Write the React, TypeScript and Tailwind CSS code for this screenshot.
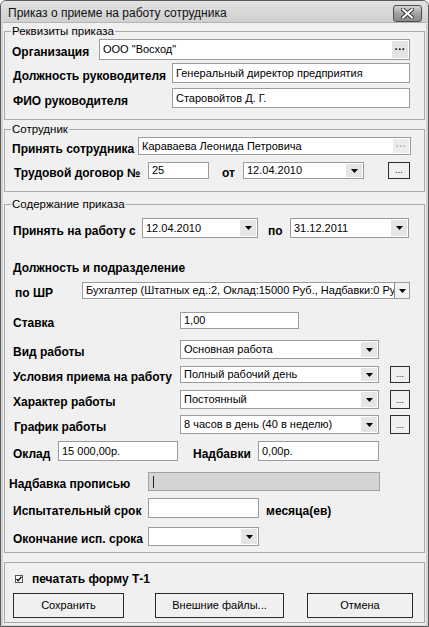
import type { ReactNode } from 'react'

const FONT = "font-['Liberation_Sans',Arial,sans-serif]"

function Label({ className = '', children }: { className?: string; children: ReactNode }) {
  return (
    <span className={`shrink-0 overflow-hidden whitespace-nowrap pt-[5px] text-[12px] leading-[14px] font-bold text-black ${className}`}>
      {children}
    </span>
  )
}

function Arrow() {
  return (
    <svg width="7" height="4" viewBox="0 0 7 4">
      <path d="M0 0h7L3.5 4z" fill="#000" />
    </svg>
  )
}

function TextBox({ className = '', value = '', disabled = false }: { className?: string; value?: string; disabled?: boolean }) {
  return (
    <div
      className={`flex h-full shrink-0 items-center overflow-hidden whitespace-nowrap border px-[3px] text-[11px] leading-[13px] ${
        disabled ? 'border-[#a3a3a3] bg-[#d4d4d4]' : 'border-[#9c9c9c] bg-white'
      } ${className}`}
    >
      {value}
      {disabled && <span className="ml-[1px] h-[12px] w-[1px] bg-[#222]" />}
    </div>
  )
}

function Combo({ className = '', value = '' }: { className?: string; value?: string }) {
  return (
    <div className={`flex h-full shrink-0 border border-[#9c9c9c] bg-white ${className}`}>
      <div className="flex min-w-0 flex-1 items-center overflow-hidden whitespace-nowrap px-[3px] text-[11px] leading-[13px]">{value}</div>
      <div className="my-[1px] mr-[1px] flex w-[16px] items-center justify-center bg-[#e6e6e6]">
        <Arrow />
      </div>
    </div>
  )
}

function DotsButton({ className = '' }: { className?: string }) {
  return (
    <div className={`flex h-full shrink-0 items-end justify-center border border-[#2e2e2e] bg-[#f0f0f0] pb-[3px] text-[9px] leading-[9px] ${className}`}>
      ...
    </div>
  )
}

function GroupBox({ legend, className = '', children }: { legend: string; className?: string; children: ReactNode }) {
  return (
    <fieldset className={`border border-[#a9a9a9] ${className}`}>
      <legend className="ml-[6px] px-[1px] text-[11.5px] leading-[14px]">{legend}</legend>
      {children}
    </fieldset>
  )
}

function CloseIcon() {
  return (
    <svg width="13" height="11" viewBox="0 0 13 11">
      <path d="M2 1.5l9 8M11 1.5l-9 8" stroke="#3a3a3a" strokeWidth="4" strokeLinecap="square" />
      <path d="M2 1.5l9 8M11 1.5l-9 8" stroke="#fff" strokeWidth="2" strokeLinecap="square" />
    </svg>
  )
}

export default function App() {
  return (
    <div className={`${FONT} flex h-[627px] w-[429px] flex-col rounded-t-[6px] border border-[#5a5a5a] bg-[#d2d2d2] text-black`}>
      {/* Title bar */}
      <div className="flex h-[21px] shrink-0 items-start rounded-t-[5px] bg-gradient-to-b from-[#e2e2e2] to-[#d0d0d0]">
        <span className="pl-[7px] pt-[5px] text-[12px] leading-[14px] text-[#111]">Приказ о приеме на работу сотрудника</span>
        <div className="ml-auto mr-[6px] mt-[4px] flex h-[17px] w-[29px] items-center justify-center rounded-[3px] border border-[#4e4e4e] bg-gradient-to-b from-[#d4d4d4] via-[#a2a2a2] to-[#8a8a8a]">
          <CloseIcon />
        </div>
      </div>

      {/* Client area */}
      <div className="mx-[2px] mb-[1px] flex flex-1 flex-col border-t border-[#b4b4b4] bg-[#f0f0f0] px-[1px] pt-[1px]">
        <GroupBox legend="Реквизиты приказа" className="pb-[11px]">
          <div className="mt-[1px] flex h-[21px] items-center">
            <Label className="w-[94px] pl-[7px]">Организация</Label>
            <div className="flex h-full w-[311px] border border-[#9c9c9c] bg-white">
              <div className="flex flex-1 items-center px-[3px] text-[11px] leading-[13px]">ООО "Восход"</div>
              <div className="my-[1px] mr-[1px] flex w-[16px] items-center justify-center bg-[#e4e4e4] text-[11px] font-bold leading-[11px]">
                ···
              </div>
            </div>
          </div>
          <div className="mt-[3px] flex h-[20px] items-center">
            <Label className="w-[167px] pl-[8px]">Должность руководителя</Label>
            <TextBox className="w-[238px]" value="Генеральный директор предприятия" />
          </div>
          <div className="mt-[5px] flex h-[20px] items-center">
            <Label className="w-[167px] pl-[8px]">ФИО руководителя</Label>
            <TextBox className="w-[238px]" value="Старовойтов Д. Г." />
          </div>
        </GroupBox>

        <GroupBox legend="Сотрудник" className="mt-[2px] pb-[12px]">
          <div className="mt-[1px] flex h-[18px] items-center">
            <Label className="w-[133px] pl-[7px]">Принять сотрудника</Label>
            <div className="flex h-full w-[273px] border border-[#9c9c9c] bg-white">
              <div className="flex flex-1 items-center px-[3px] text-[11px] leading-[13px]">Караваева Леонида Петровича</div>
              <div className="my-[1px] mr-[1px] flex w-[16px] items-center justify-center bg-[#ececec] text-[11px] font-bold leading-[11px] text-[#b4b4b4]">
                ···
              </div>
            </div>
          </div>
          <div className="mt-[7px] flex h-[17px] items-center">
            <Label className="w-[143px] pl-[9px]">Трудовой договор №</Label>
            <TextBox className="w-[61px]" value="25" />
            <Label className="w-[34px] pl-[13px]">от</Label>
            <Combo className="w-[121px]" value="12.04.2010" />
            <DotsButton className="ml-[24px] w-[22px]" />
          </div>
        </GroupBox>

        <GroupBox legend="Содержание приказа" className="mt-[5px] pb-[6px]">
          <div className="mt-[7px] flex h-[20px] items-center">
            <Label className="w-[137px] pl-[8px]">Принять на работу с</Label>
            <Combo className="w-[116px]" value="12.04.2010" />
            <Label className="w-[32px] pl-[10px]">по</Label>
            <Combo className="w-[119px]" value="31.12.2011" />
          </div>
          <div className="mt-[17px] flex h-[20px] items-center">
            <Label className="pl-[8px]">Должность и подразделение</Label>
          </div>
          <div className="mt-[7px] flex h-[17px] items-center">
            <Label className="w-[77px] pl-[10px]">по ШР</Label>
            <div className="flex h-full w-[328px] border border-[#9c9c9c] bg-white">
              <div className="flex min-w-0 flex-1 items-center overflow-hidden whitespace-nowrap px-[3px] text-[11px] leading-[13px]">
                Бухгалтер (Штатных ед.:2, Оклад:15000 Руб., Надбавки:0 Руб.)
              </div>
              <div className="flex w-[15px] items-center justify-center border-l border-[#8a8a8a] bg-[#f2f2f2]">
                <Arrow />
              </div>
            </div>
          </div>
          <div className="mt-[13px] flex h-[17px] items-center">
            <Label className="w-[175px] pl-[8px]">Ставка</Label>
            <TextBox className="w-[119px]" value="1,00" />
          </div>
          <div className="mt-[11px] flex h-[19px] items-center">
            <Label className="w-[175px] pl-[8px]">Вид работы</Label>
            <Combo className="w-[199px]" value="Основная работа" />
          </div>
          <div className="mt-[7px] flex h-[17px] items-center">
            <Label className="w-[175px] pl-[8px]">Условия приема на работу</Label>
            <Combo className="w-[199px]" value="Полный рабочий день" />
            <DotsButton className="ml-[11px] w-[20px]" />
          </div>
          <div className="mt-[7px] flex h-[19px] items-center">
            <Label className="w-[175px] pl-[8px]">Характер работы</Label>
            <Combo className="w-[199px]" value="Постоянный" />
            <DotsButton className="ml-[11px] w-[20px]" />
          </div>
          <div className="mt-[6px] flex h-[19px] items-center">
            <Label className="w-[175px] pl-[9px]">График работы</Label>
            <Combo className="w-[199px]" value="8 часов в день (40 в неделю)" />
            <DotsButton className="ml-[11px] w-[20px]" />
          </div>
          <div className="mt-[7px] flex h-[20px] items-center">
            <Label className="w-[53px] pl-[8px]">Оклад</Label>
            <TextBox className="w-[120px]" value="15 000,00р." />
            <Label className="w-[80px] pl-[15px]">Надбавки</Label>
            <TextBox className="w-[121px]" value="0,00р." />
          </div>
          <div className="mt-[11px] flex h-[19px] items-center">
            <Label className="w-[143px] pl-[4px]">Надбавка прописью</Label>
            <TextBox className="w-[232px]" disabled />
          </div>
          <div className="mt-[7px] flex h-[20px] items-center">
            <Label className="w-[143px] pl-[8px]">Испытательный срок</Label>
            <TextBox className="w-[111px]" />
            <Label className="pl-[7px]">месяца(ев)</Label>
          </div>
          <div className="mt-[9px] flex h-[19px] items-center">
            <Label className="w-[143px] pl-[8px]">Окончание исп. срока</Label>
            <Combo className="w-[111px]" />
          </div>
        </GroupBox>

        <div className="mt-[9px] border border-[#a9a9a9] pb-[4px]">
          <div className="mt-[9px] flex h-[14px] items-center pl-[10px]">
            <div className="flex h-[8px] w-[8px] items-center justify-center border border-[#555] bg-white">
              <svg width="6" height="6" viewBox="0 0 6 6">
                <path d="M0.5 3l1.7 1.8L5.5 0.8" stroke="#111" strokeWidth="1.4" fill="none" />
              </svg>
            </div>
            <span className="pl-[9px] text-[12px] font-bold leading-[14px]">печатать форму Т-1</span>
          </div>
          <div className="mt-[7px] flex h-[25px] items-stretch pl-[8px] text-[11px] leading-[13px]">
            <button className="flex w-[111px] items-center justify-center border border-[#2a2a2a] bg-[#f0f0f0]">Сохранить</button>
            <button className="ml-[31px] flex w-[129px] items-center justify-center border border-[#2a2a2a] bg-[#f0f0f0]">Внешние файлы...</button>
            <button className="ml-[23px] flex w-[106px] items-center justify-center border border-[#2a2a2a] bg-[#f0f0f0]">Отмена</button>
          </div>
        </div>
      </div>
    </div>
  )
}
